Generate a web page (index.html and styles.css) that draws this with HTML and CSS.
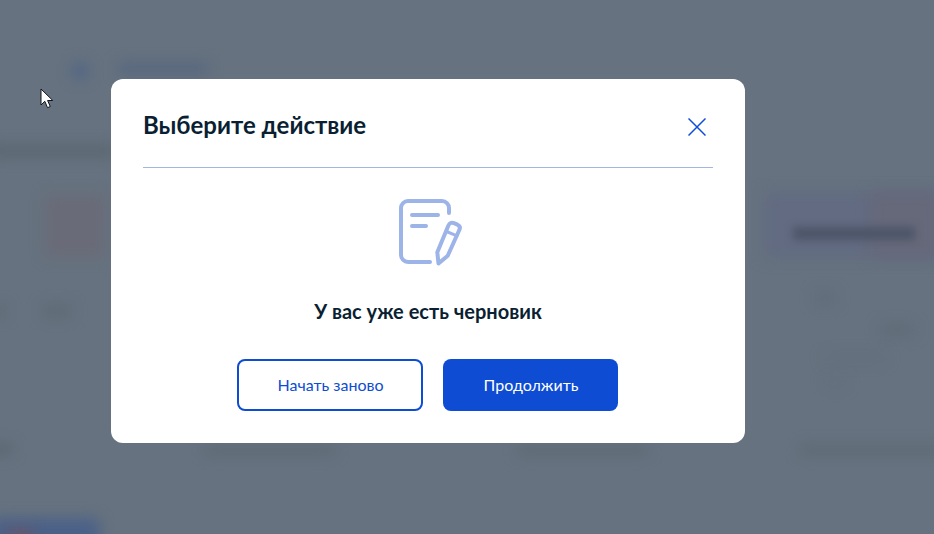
FILE: index.html
```html
<!DOCTYPE html>
<html lang="ru">
<head>
<meta charset="utf-8">
<title>Выберите действие</title>
<link rel="stylesheet" href="styles.css">
</head>
<body>
<div class="backdrop" aria-hidden="true">
  <i class="blob b-dot"></i>
  <i class="blob b-link"></i>
  <i class="blob b-band"></i>
  <i class="blob b-red2"></i>
  <i class="blob b-card"></i>
  <i class="blob b-card-end"></i>
  <i class="blob b-card-text"></i>
  <i class="blob b-f1"></i>
  <i class="blob b-f2"></i>
  <i class="blob b-f3"></i>
  <i class="blob b-f4"></i>
  <i class="blob b-f5"></i>
  <i class="blob b-f6"></i>
  <i class="blob b-row1"></i>
  <i class="blob b-row2"></i>
  <i class="blob b-row3"></i>
  <i class="blob b-row4"></i>
  <i class="blob b-btn"></i>
  <i class="blob b-btn-red"></i>
</div>

<section class="modal">
  <header class="modal-head">
    <h1 class="modal-title">Выберите действие</h1>
    <button class="close" type="button" aria-label="Закрыть">
      <svg class="close-icon" width="18" height="18" viewBox="0 0 18 18" fill="none" stroke="#0f4fd8" stroke-width="1.5"><path d="M.5.5l17 17M17.5.5l-17 17"/></svg>
    </button>
  </header>
  <div class="modal-body">
    <svg class="draft-icon" width="64" height="68" viewBox="0 0 64 68" fill="none" stroke="#9db4e8" stroke-width="4" stroke-linecap="round" stroke-linejoin="round">
      <path d="M50 14V9a7 7 0 0 0-7-7H9a7 7 0 0 0-7 7v47a7 7 0 0 0 7 7h22"/>
      <path d="M13 16h26M13 27h14"/>
      <path d="M38.300 53.300L49.300 26.700Q51 22.500 55 24.200L58.500 25.700Q62 27.500 60.300 31L48.700 56.700 39.500 64.500Z"/>
      <path d="M47.500 32.500L58 36.800" stroke-width="3"/>
    </svg>
    <p class="draft-text">У вас уже есть черновик</p>
    <div class="actions">
      <button class="btn btn-outline" type="button">Начать заново</button>
      <button class="btn btn-primary" type="button">Продолжить</button>
    </div>
  </div>
</section>

<svg class="cursor" width="15" height="21" viewBox="0 0 15 21" aria-hidden="true">
  <path d="M1 1v16l3.800-3.700 2.700 6.400 2.800-1.200-2.700-6h5.200z" fill="#fff" stroke="#10141c" stroke-width="1"/>
</svg>
</body>
</html>
```
FILE: styles.css
```css
* { box-sizing: border-box; }

html, body { height: 100%; }

body {
  margin: 0;
  position: relative;
  overflow: hidden;
  background: #66727f;
  font-family: Lato, "Noto Sans", sans-serif;
  padding: 79px 0 0 111px;
}

.backdrop {
  position: absolute;
  inset: 0;
  overflow: hidden;
}

.blob { position: absolute; display: block; filter: blur(7px); }

.b-dot { left: 71px; top: 62px; width: 18px; height: 18px; border-radius: 50%; background: #526585; }
.b-link { left: 118px; top: 63px; width: 90px; height: 11px; background: #566680; }
.b-band { left: -10px; top: 145px; width: 125px; height: 12px; background: #5b6672; }
.b-red2 { left: 45px; top: 195px; width: 60px; height: 62px; background: #6a6b78; }
.b-card { left: 764px; top: 192px; width: 180px; height: 66px; background: #626b82; }
.b-card-end { left: 870px; top: 192px; width: 70px; height: 66px; background: #66697a; }
.b-card-text { left: 793px; top: 227px; width: 122px; height: 13px; background: #4c5568; filter: blur(4px); }
.b-f1 { left: 42px; top: 305px; width: 30px; height: 12px; background: #5f6a76; }
.b-f2 { left: -8px; top: 305px; width: 14px; height: 12px; background: #5f6a76; }
.b-f3 { left: 815px; top: 292px; width: 20px; height: 12px; background: #606c79; }
.b-f4 { left: 880px; top: 325px; width: 34px; height: 10px; background: #5f6a77; }
.b-f5 { left: 825px; top: 355px; width: 60px; height: 6px; background: #626d7b; }
.b-f6 { left: 825px; top: 380px; width: 20px; height: 6px; background: #626d7b; }
.b-row1 { left: -8px; top: 444px; width: 20px; height: 10px; background: #5a6570; }
.b-row2 { left: 205px; top: 446px; width: 130px; height: 8px; background: #5c6873; }
.b-row3 { left: 518px; top: 446px; width: 130px; height: 8px; background: #5c6873; }
.b-row4 { left: 800px; top: 446px; width: 150px; height: 8px; background: #5c6873; }
.b-btn { left: -10px; top: 518px; width: 110px; height: 30px; border-radius: 8px; background: #4b6188; }
.b-btn-red { left: 8px; top: 530px; width: 24px; height: 14px; background: #6c5466; }

.modal {
  position: relative;
  width: 634px;
  height: 364px;
  padding: 32px;
  background: #fff;
  border-radius: 12px;
}

.modal-head {
  display: flex;
  align-items: flex-start;
  justify-content: space-between;
  height: 57px;
  border-bottom: 1px solid #a3b6e0;
}

.modal-title {
  margin: -1px 0 0;
  font-size: 24px;
  line-height: 30px;
  font-weight: 700;
  color: #0b1f33;
}

.close {
  display: flex;
  margin: 7px 7px 0 0;
  padding: 0;
  border: 0;
  background: none;
}

.modal-body {
  display: flex;
  flex-direction: column;
  align-items: center;
}

.draft-icon { margin: 31px 0 0 6px; }

.draft-text {
  margin: 31px 0 0;
  font-size: 20px;
  line-height: 26px;
  font-weight: 700;
  color: #0b1f33;
}

.actions {
  display: flex;
  gap: 20px;
  margin: 35px 2px 0 0;
}

.btn {
  height: 52px;
  padding: 0 0 0 2px;
  border-radius: 8px;
  font-family: inherit;
  font-size: 16px;
  line-height: 24px;
}

.btn-outline {
  width: 186px;
  border: 2px solid #0d4cd3;
  background: #fff;
  color: #0d4cd3;
}

.btn-primary {
  width: 175px;
  border: 0;
  background: #0d4cd3;
  color: #fff;
}

.cursor { position: absolute; left: 40px; top: 88px; }
```
